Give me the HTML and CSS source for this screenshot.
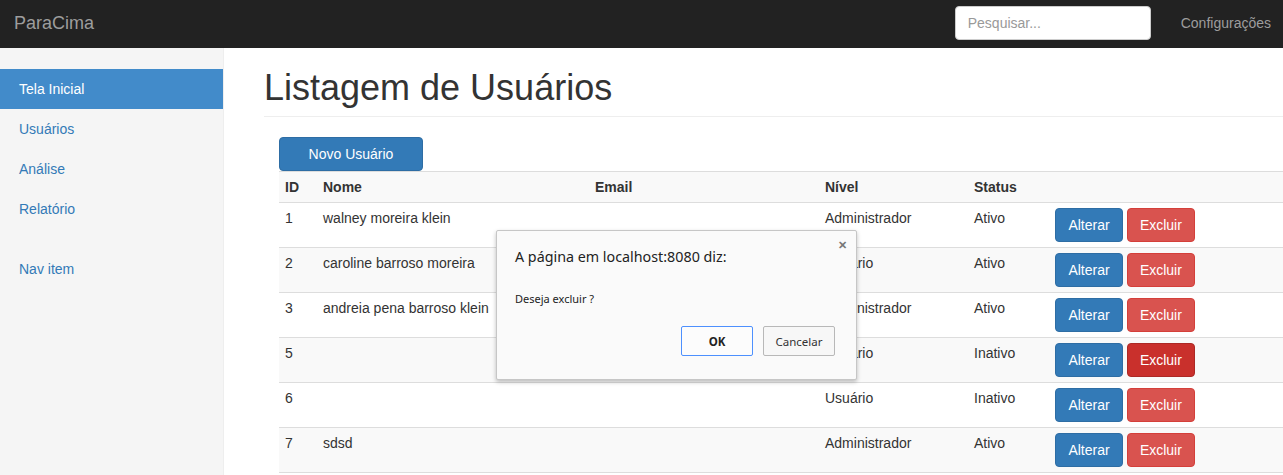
FILE: index.html
```html
<!DOCTYPE html>
<html lang="pt-BR">
<head>
<meta charset="utf-8">
<title>ParaCima</title>
<link rel="stylesheet" href="styles.css">
</head>
<body>
<nav class="navbar">
  <a class="brand" href="#">ParaCima</a>
  <div class="navbar-right">
    <input class="search" type="text" placeholder="Pesquisar...">
    <a class="nav-link" href="#">Configurações</a>
  </div>
</nav>
<div class="layout">
  <aside class="sidebar">
    <ul class="nav-group">
      <li><a class="active" href="#">Tela Inicial</a></li>
      <li><a href="#">Usuários</a></li>
      <li><a href="#">Análise</a></li>
      <li><a href="#">Relatório</a></li>
    </ul>
    <ul class="nav-group">
      <li><a href="#">Nav item</a></li>
    </ul>
  </aside>
  <main class="main">
    <h1 class="page-header">Listagem de Usuários</h1>
    <div class="content">
      <button class="btn btn-primary btn-new">Novo Usuário</button>
      <table class="table">
        <colgroup>
          <col class="c-id"><col class="c-nome"><col class="c-email"><col class="c-nivel"><col class="c-status"><col>
        </colgroup>
        <tbody>
          <tr class="head"><th>ID</th><th>Nome</th><th>Email</th><th>Nível</th><th>Status</th><th></th></tr>
          <tr><td>1</td><td>walney moreira klein</td><td></td><td>Administrador</td><td>Ativo</td><td><button class="btn btn-primary btn-row">Alterar</button> <button class="btn btn-danger btn-row">Excluir</button></td></tr>
          <tr><td>2</td><td>caroline barroso moreira</td><td></td><td>Usuário</td><td>Ativo</td><td><button class="btn btn-primary btn-row">Alterar</button> <button class="btn btn-danger btn-row">Excluir</button></td></tr>
          <tr><td>3</td><td>andreia pena barroso klein</td><td></td><td>Administrador</td><td>Ativo</td><td><button class="btn btn-primary btn-row">Alterar</button> <button class="btn btn-danger btn-row">Excluir</button></td></tr>
          <tr><td>5</td><td></td><td></td><td>Usuário</td><td>Inativo</td><td><button class="btn btn-primary btn-row">Alterar</button> <button class="btn btn-danger btn-row is-active">Excluir</button></td></tr>
          <tr><td>6</td><td></td><td></td><td>Usuário</td><td>Inativo</td><td><button class="btn btn-primary btn-row">Alterar</button> <button class="btn btn-danger btn-row">Excluir</button></td></tr>
          <tr><td>7</td><td>sdsd</td><td></td><td>Administrador</td><td>Ativo</td><td><button class="btn btn-primary btn-row">Alterar</button> <button class="btn btn-danger btn-row">Excluir</button></td></tr>
        </tbody>
      </table>
    </div>
  </main>
</div>
<div class="dialog" role="alertdialog">
  <span class="dialog-close">&#x2715;</span>
  <div class="dialog-title">A página em localhost:8080 diz:</div>
  <div class="dialog-body">Deseja excluir ?</div>
  <div class="dialog-actions">
    <button class="dbtn dbtn-ok">OK</button>
    <button class="dbtn">Cancelar</button>
  </div>
</div>
</body>
</html>
```
FILE: styles.css
```css
* { box-sizing: border-box; }
html, body { margin: 0; padding: 0; }
body {
  font-family: "Liberation Sans", Arial, sans-serif;
  font-size: 14px;
  line-height: 20px;
  color: #333;
  background: #fff;
  overflow: hidden;
  height: 475px;
}
a { text-decoration: none; }

.navbar {
  height: 48px;
  background: #222;
  display: flex;
  align-items: center;
  justify-content: space-between;
}
.brand {
  color: #9d9d9d;
  font-size: 18px;
  padding-left: 15px;
  line-height: 20px;
  margin-top: -2px;
  margin-left: -1px;
}
.navbar-right {
  display: flex;
  align-items: center;
  padding-right: 12px;
  margin-top: -2px;
}
.search {
  width: 196px;
  height: 34px;
  border: 1px solid #ccc;
  border-radius: 4px;
  padding: 6px 12px;
  font-family: "Liberation Sans", Arial, sans-serif;
  font-size: 14px;
  color: #555;
  background: #fff;
  margin-right: 30px;
}
.search::placeholder { color: #999; }
.nav-link { color: #9d9d9d; font-size: 14px; }

.layout { display: flex; }
.sidebar {
  width: 224px;
  flex: none;
  min-height: 427px;
  background: #f5f5f5;
  border-right: 1px solid #eee;
  padding-top: 21px;
}
.nav-group { list-style: none; margin: 0 0 20px; padding: 0; }
.nav-group a {
  display: block;
  padding: 10px 19px;
  color: #337ab7;
}
.nav-group a.active { background: #428bca; color: #fff; }

.main {
  flex: 1;
  padding: 20px 0 0 40px;
  min-width: 0;
}
.page-header {
  margin: 0 0 20px;
  padding-bottom: 8px;
  border-bottom: 1px solid #eee;
  font-size: 36px;
  font-weight: 500;
  line-height: 1.1;
  color: #333;
}
.content { padding-left: 15px; }

.btn {
  display: inline-block;
  height: 34px;
  padding: 6px 12px;
  font-family: "Liberation Sans", Arial, sans-serif;
  font-size: 14px;
  line-height: 20px;
  border: 1px solid transparent;
  border-radius: 4px;
  color: #fff;
  cursor: pointer;
  vertical-align: top;
}
.btn-primary { background: #337ab7; border-color: #2e6da4; }
.btn-danger { background: #d9534f; border-color: #d43f3a; }
.btn-danger.is-active { background: #c9302c; border-color: #ac2925; }
.btn-new { width: 144px; display: block; }
.btn-row { width: 68px; padding: 6px 0; text-align: center; }

.table {
  width: 100%;
  border-collapse: collapse;
  table-layout: fixed;
}
.c-id { width: 38px; }
.c-nome { width: 272px; }
.c-email { width: 230px; }
.c-nivel { width: 149px; }
.c-status { width: 81px; }
.table th, .table td {
  padding: 5px 6px;
  text-align: left;
  vertical-align: top;
  border-top: 1px solid #ddd;
  white-space: nowrap;
}
.table th { font-weight: bold; }
.table tr:last-child td { border-bottom: 1px solid #ddd; }
.table tbody tr:nth-of-type(odd) { background: #f9f9f9; }

.dialog {
  position: absolute;
  left: 496px;
  top: 230px;
  width: 361px;
  height: 150px;
  background: #fafafa;
  border: 1px solid #c6c6c6;
  border-radius: 2px;
  box-shadow: 0 2px 4px rgba(0,0,0,0.25);
  font-family: "Noto Sans", "Open Sans", sans-serif;
  color: #222;
  padding: 14px 21px 0 18px;
}
.dialog-close {
  position: absolute;
  right: 9px;
  top: 8px;
  font-size: 11px;
  font-weight: bold;
  color: #777;
  line-height: 12px;
}
.dialog-title { font-size: 14.3px; line-height: 24px; }
.dialog-body { font-size: 11px; line-height: 16px; margin-top: 22px; }
.dialog-actions {
  display: flex;
  justify-content: flex-end;
  gap: 10px;
  margin-top: 19px;
}
.dbtn {
  width: 72px;
  height: 30px;
  background: #f7f7f7;
  border: 1px solid #b8b8b8;
  border-radius: 2px;
  font-family: "Noto Sans", "Open Sans", sans-serif;
  font-size: 11.5px;
  color: #333;
  padding: 0;
}
.dbtn-ok {
  background: #fcfcfc;
  border-color: #4d90fe;
  font-weight: bold;
  color: #222;
}
```
